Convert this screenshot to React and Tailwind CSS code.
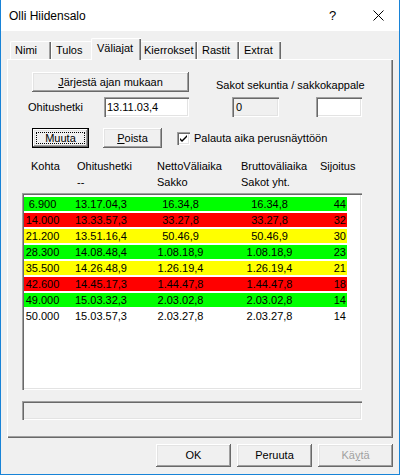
import React from "react";

const raised =
  "bg-[#f0f0f0] shadow-[inset_-1px_-1px_0_#696969,inset_1px_1px_0_#ffffff,inset_-2px_-2px_0_#a0a0a0,inset_2px_2px_0_#e3e3e3]";
const sunken =
  "shadow-[inset_1px_1px_0_#a0a0a0,inset_2px_2px_0_#696969,inset_-1px_-1px_0_#ffffff,inset_-2px_-2px_0_#e3e3e3]";

const tabs = [
  { label: "Nimi", w: "w-[41px]" },
  { label: "Tulos", w: "w-[42px]" },
  { label: "Väliajat", w: "w-[50px]", active: true },
  { label: "Kierrokset", w: "w-[58px]" },
  { label: "Rastit", w: "w-[42px]" },
  { label: "Extrat", w: "w-[42px]" },
];

const rows = [
  ["6.900", "13.17.04,3", "16.34,8", "16.34,8", "44", "bg-[#00ff00]"],
  ["14.000", "13.33.57,3", "33.27,8", "33.27,8", "32", "bg-[#ff0000]"],
  ["21.200", "13.51.16,4", "50.46,9", "50.46,9", "30", "bg-[#ffff00]"],
  ["28.300", "14.08.48,4", "1.08.18,9", "1.08.18,9", "23", "bg-[#00ff00]"],
  ["35.500", "14.26.48,9", "1.26.19,4", "1.26.19,4", "21", "bg-[#ffff00]"],
  ["42.600", "14.45.17,3", "1.44.47,8", "1.44.47,8", "18", "bg-[#ff0000]"],
  ["49.000", "15.03.32,3", "2.03.02,8", "2.03.02,8", "14", "bg-[#00ff00]"],
  ["50.000", "15.03.57,3", "2.03.27,8", "2.03.27,8", "14", "bg-white"],
];

export default function App() {
  return (
    <div
      className="w-[400px] h-[475px] flex flex-col bg-[#f0f0f0] border-x border-b border-[#1883d7] text-black text-[11px] overflow-hidden"
      style={{ fontFamily: '"Liberation Sans", Arial, sans-serif' }}
    >
      {/* Title bar */}
      <div className="h-[31px] shrink-0 bg-white flex items-center pl-[8px] text-[12px]">
        <span className="flex-1">Olli Hiidensalo</span>
        <span className="w-[12px] text-[13px] mr-[32px]">?</span>
        <svg width="11" height="11" viewBox="0 0 11 11" className="mr-[15px]">
          <path d="M0.5 0.5 L10.5 10.5 M10.5 0.5 L0.5 10.5" stroke="#000" strokeWidth="1" />
        </svg>
      </div>

      {/* Tab strip */}
      <div className="h-[28px] shrink-0 flex items-end pl-[9px]">
        {tabs.map((t) =>
          t.active ? (
            <div
              key={t.label}
              className={`${t.w} -mx-[2px] h-[22px] -mb-[1px] relative z-10 bg-[#f0f0f0] border-t border-l border-white shadow-[inset_-1px_0_0_#696969,inset_-2px_0_0_#a0a0a0] rounded-tl-[2px] pl-[5px] pt-[3px] leading-[13px]`}
            >
              {t.label}
            </div>
          ) : (
            <div
              key={t.label}
              className={`${t.w} h-[18px] border-t border-l border-white shadow-[inset_-1px_0_0_#696969,inset_-2px_0_0_#a0a0a0] rounded-tl-[2px] pl-[4px] pt-[2px] leading-[13px]`}
            >
              {t.label}
            </div>
          )
        )}
      </div>

      {/* Tab panel */}
      <div className="ml-[6px] w-[386px] h-[379px] shrink-0 border-t border-l border-white shadow-[inset_-1px_-1px_0_#696969,inset_-2px_-2px_0_#a0a0a0] flex flex-col">
        {/* Row 1 */}
        <div className="mt-[12px] flex h-[20px]">
          <button className={`${raised} ml-[24px] w-[157px] h-[20px] leading-[20px]`}>
            <span className="underline">J</span>ärjestä ajan mukaan
          </button>
          <span className="ml-[27px] pt-[7px] leading-[13px]">Sakot sekuntia / sakkokappale</span>
        </div>

        {/* Row 2 */}
        <div className="mt-[5px] flex h-[20px] items-center">
          <span className="ml-[20px] w-[76px]">Ohitushetki</span>
          <div className={`${sunken} bg-white w-[85px] h-[20px] pl-[3px] leading-[20px]`}>13.11.03,4</div>
          <div className={`${sunken} bg-[#f0f0f0] ml-[43px] w-[47px] h-[20px] pl-[4px] leading-[20px]`}>0</div>
          <div className={`${sunken} bg-white ml-[37px] w-[46px] h-[20px]`}></div>
        </div>

        {/* Row 3 */}
        <div className="mt-[11px] flex h-[20px] items-center">
          <button className="ml-[24px] w-[57px] h-[20px] border border-black p-0">
            <div className={`${raised} w-full h-full p-[3px]`}>
              <div className="w-full h-full border border-dotted border-black flex items-center justify-center leading-[11px]">
                Muuta
              </div>
            </div>
          </button>
          <button className={`${raised} ml-[14px] w-[59px] h-[20px] leading-[20px]`}>
            <span className="underline">P</span>oista
          </button>
          <div className={`${sunken} bg-white ml-[15px] w-[13px] h-[13px] flex items-center justify-center`}>
            <svg width="7" height="7" viewBox="0 0 7 7">
              <path d="M0 3 L0 5 L2 7 L7 2 L7 0 L2 5 Z" fill="#000" />
            </svg>
          </div>
          <span className="ml-[4px]">Palauta aika perusnäyttöön</span>
        </div>

        {/* Column headers */}
        <div className="mt-[10px] flex leading-[16px]">
          <div className="ml-[23px] w-[46px]">Kohta</div>
          <div className="w-[80px]">
            <div>Ohitushetki</div>
            <div>--</div>
          </div>
          <div className="w-[84px]">
            <div>NettoVäliaika</div>
            <div>Sakko</div>
          </div>
          <div className="w-[79px]">
            <div>Bruttoväliaika</div>
            <div>Sakot yht.</div>
          </div>
          <div>Sijoitus</div>
        </div>

        {/* List */}
        <div className={`${sunken} bg-white mt-[3px] ml-[14px] w-[340px] h-[197px] pt-[4px] pl-[2px]`}>
          {rows.map((r, i) => (
            <div key={i} className={`${r[5]} w-[323px] h-[14px] mb-[2px] flex leading-[14px]`}>
              <div className="w-[37px] text-center">{r[0]}</div>
              <div className="w-[86px] pl-[14px]">{r[1]}</div>
              <div className="w-[67px] text-center">{r[2]}</div>
              <div className="w-[111px] text-center">{r[3]}</div>
              <div className="w-[22px] text-right pr-[1px]">{r[4]}</div>
            </div>
          ))}
        </div>

        {/* Status */}
        <div className={`${sunken} mt-[11px] ml-[14px] w-[340px] h-[19px]`}></div>
      </div>

      {/* Bottom buttons */}
      <div className="mt-[6px] flex justify-end gap-[6px] pr-[6px]">
        <button className={`${raised} w-[75px] h-[23px] leading-[23px]`}>OK</button>
        <button className={`${raised} w-[75px] h-[23px] leading-[23px]`}>Peruuta</button>
        <button className={`${raised} w-[75px] h-[23px] leading-[23px] text-[#a0a0a0]`}>
          Kä<span className="underline">y</span>tä
        </button>
      </div>
    </div>
  );
}
